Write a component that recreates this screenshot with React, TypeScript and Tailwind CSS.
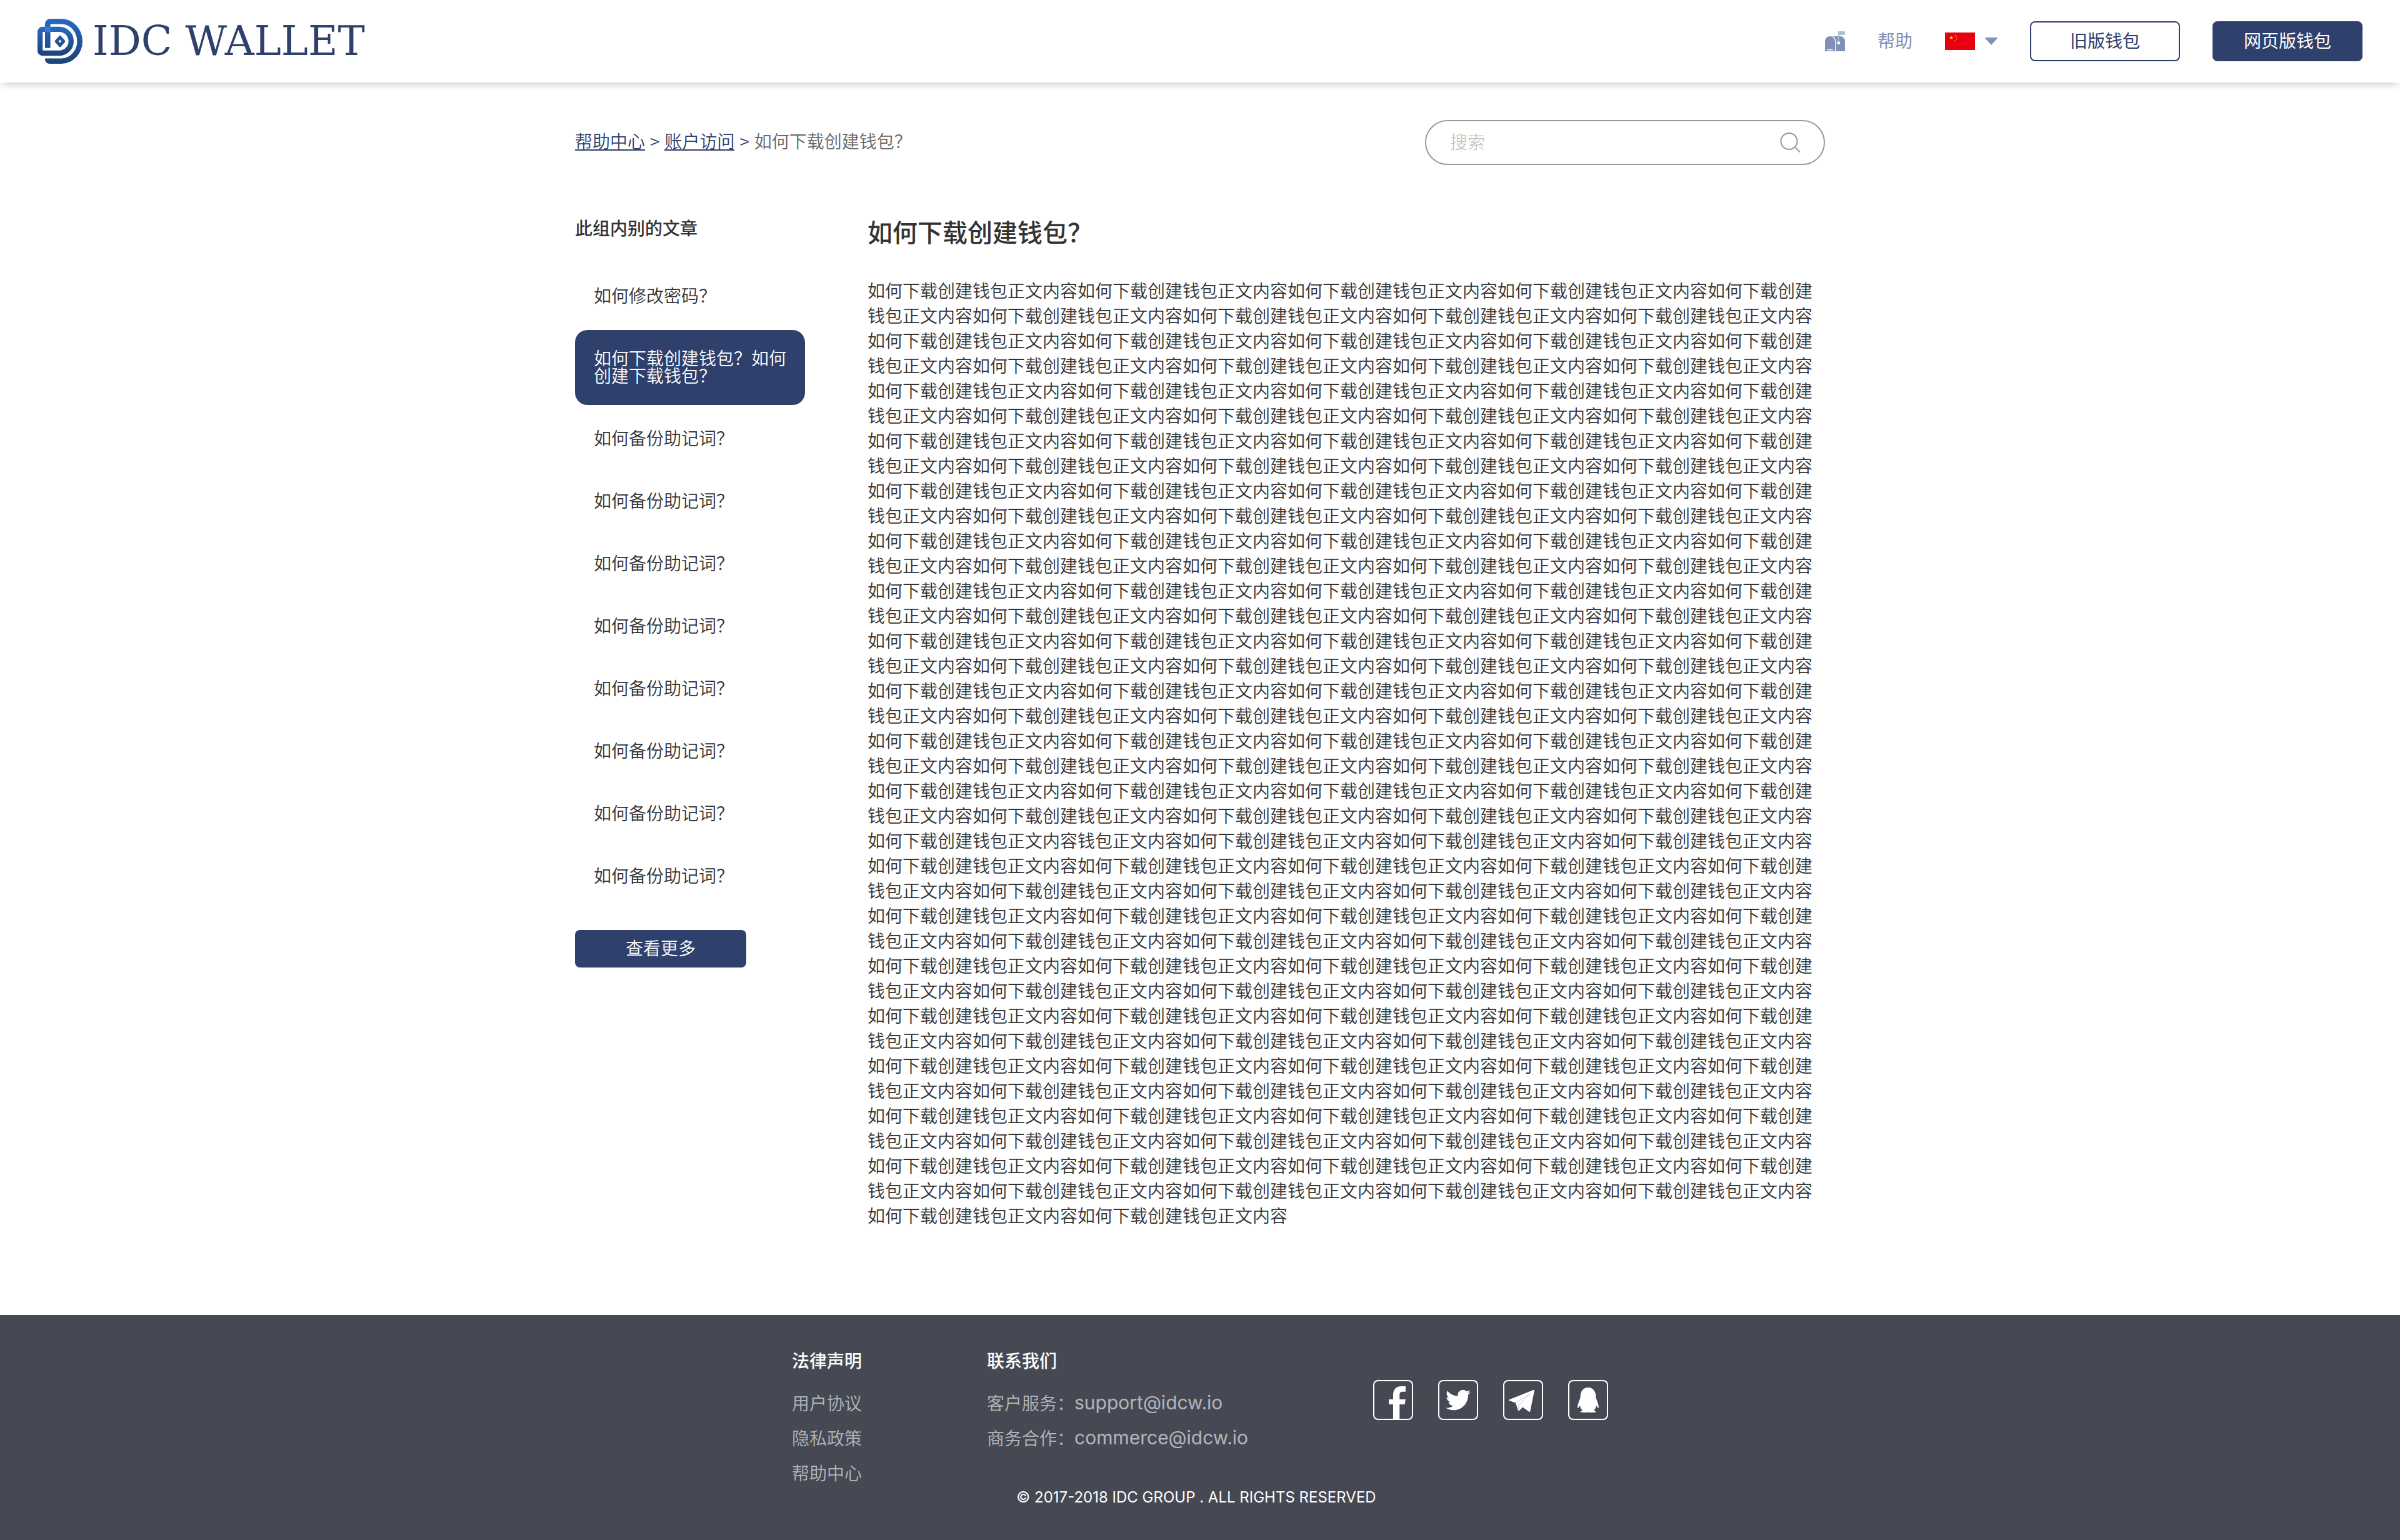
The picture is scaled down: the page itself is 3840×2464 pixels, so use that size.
import type { ReactNode } from 'react';
import { FaQq, FaTwitter } from 'react-icons/fa';

const UNIT = '如何下载创建钱包正文内容';
const ARTICLE = UNIT.repeat(100) + '钱包正文内容' + UNIT.repeat(68);

const ARTICLES = [
  '如何修改密码？',
  '如何下载创建钱包？如何创建下载钱包？',
  ...Array<string>(8).fill('如何备份助记词？'),
];
const ACTIVE = 1;

function LogoMark() {
  return (
    <svg className="size-18" viewBox="0 0 72 72" fill="none" aria-hidden="true">
      <defs>
        <linearGradient id="mark" gradientUnits="userSpaceOnUse" x1="0" y1="0" x2="0" y2="72">
          <stop offset="0" stopColor="#2869c0" />
          <stop offset="1" stopColor="#1b4377" />
        </linearGradient>
        <linearGradient id="markInner" gradientUnits="userSpaceOnUse" x1="0" y1="13" x2="0" y2="59">
          <stop offset="0" stopColor="#2869c0" />
          <stop offset="1" stopColor="#1b4377" />
        </linearGradient>
      </defs>
      <path d="M16.3 46.7V8.3a4 4 0 0 1 4-4H38A29.7 31.7 0 0 1 38 67.7H20" stroke="url(#mark)" strokeWidth="8.6" />
      <path d="M12 63.4H21V72H19.5A7.5 7.5 0 0 1 12 63.4Z" fill="url(#mark)" />
      <path d="M4.1 20.9a4 4 0 0 1 4-4H36A19.2 19.1 0 0 1 36 55H8.1a4 4 0 0 1-4-4Z" stroke="url(#markInner)" strokeWidth="8.3" />
      <path d="M12 12.7h8.6v8.4H12Z" fill="#3478dc" />
      <path
        fillRule="evenodd"
        d="M34.8 27.2q1.2-1.2 2.4 0l6.6 7.4q1.2 1.4 0 2.8l-6.6 7.6q-1.2 1.2-2.4 0l-6.6-7.6q-1.2-1.4 0-2.8ZM36 33.6l-2.2 2.4 2.2 2.4 2.2-2.4Z"
        fill="url(#markInner)"
      />
    </svg>
  );
}

function MailboxIcon() {
  return (
    <svg className="size-8" viewBox="0 0 32 32" aria-hidden="true">
      <path d="M0 32V16a8 8 0 0 1 16 0v16Z" fill="#8090b9" />
      <path d="M12.5 8H24a8 8 0 0 1 8 8v16H17.2V16a9 9 0 0 0-4.7-8Z" fill="#8090b9" />
      <rect x="3" y="29" width="10" height="1.4" rx=".7" fill="#fff" />
      <circle cx="21.6" cy="18.4" r="2.6" fill="#fff" />
      <path d="M20.8 0H30.5a1.5 1.5 0 0 1 1.5 1.5V4.5a1.5 1.5 0 0 1-1.5 1.5H22.4V18.5h-1.6Z" fill="#b3bdd8" />
    </svg>
  );
}

function star(cx: number, cy: number, r: number) {
  return Array.from({ length: 10 }, (_, i) => {
    const a = (Math.PI * i) / 5 - Math.PI / 2;
    const d = i % 2 ? r * 0.4 : r;
    return `${cx + d * Math.cos(a)},${cy + d * Math.sin(a)}`;
  }).join(' ');
}

function FlagIcon() {
  return (
    <svg className="h-7 w-12" viewBox="0 0 48 28" aria-hidden="true">
      <path d="M0 0h48v28H0Z" fill="#e60012" />
      <polygon points={star(10, 8.4, 3.6)} fill="#ffe100" />
      <polygon points={star(16, 4.8, 1.3)} fill="#ffe100" />
      <polygon points={star(18.6, 7.2, 1.3)} fill="#ffe100" />
      <polygon points={star(18.6, 10.8, 1.3)} fill="#ffe100" />
      <polygon points={star(16, 13.2, 1.3)} fill="#ffe100" />
    </svg>
  );
}

function SearchIcon() {
  return (
    <svg className="size-8" viewBox="0 0 32 32" fill="none" stroke="#999" strokeWidth="2" aria-hidden="true">
      <circle cx="14.5" cy="14" r="13" />
      <path d="M24 23.5l8 8" />
    </svg>
  );
}

function FacebookIcon() {
  return (
    <svg className="size-16" viewBox="0 0 64 64" fill="currentColor" aria-hidden="true">
      <path d="M32 63V39H25V31H32V24C32 15 37 10 45 10H52V18.7H47.5C44 18.7 42.3 20 42.3 24V31H52L50.5 39H42.3V63Z" />
    </svg>
  );
}

function TelegramIcon() {
  return (
    <svg className="size-16" viewBox="0 0 64 64" aria-hidden="true">
      <path
        d="M49 15.7q1.3 0 1 1.3L43.3 50q-.4 1.6-1.8.7L31.3 43.5L25.5 49.3q-1.3 1-1.7-.5L20 36.5L9.5 33q-1-.6 0-1.500Z"
        fill="#fff"
      />
      <path d="M20 36.5L43.3 22L25 39.8L24.4 49" fill="none" stroke="#b9bbc0" strokeWidth=".8" />
    </svg>
  );
}

function SocialLink({ label, children }: { label: string; children: ReactNode }) {
  return (
    <a
      href="#"
      aria-label={label}
      className="flex size-16 items-center justify-center rounded-lg text-white ring-2 ring-white ring-inset"
    >
      {children}
    </a>
  );
}

function ContactLine({ label, email }: { label: string; email: string }) {
  return (
    <li className="flex whitespace-nowrap">
      <span>{label}</span>
      <a href={`mailto:${email}`} className="font-['Inter',sans-serif] text-[30px] font-normal">{email}</a>
    </li>
  );
}

export default function App() {
  return (
    <div className="flex min-h-screen flex-col bg-white font-['Noto_Sans_CJK_SC',sans-serif] text-[28px] leading-7 font-[350] text-[#333]">
      <header className="flex h-33 items-center justify-between px-15 shadow-[0_6px_12px_-4px_rgba(46,64,107,0.3)]">
        <a href="#" className="flex items-center gap-4">
          <LogoMark />
          <span className="font-['DejaVu_Serif',serif] text-[65px] leading-16 font-normal text-[#2e406b]">IDC WALLET</span>
        </a>
        <nav className="flex items-center gap-13">
          <a href="#" aria-label="邮箱">
            <MailboxIcon />
          </a>
          <a href="#" className="pb-1 font-normal text-[#7f8fb9]">帮助</a>
          <button type="button" aria-label="语言" className="flex items-center gap-4">
            <FlagIcon />
            <svg className="h-3 w-5" viewBox="0 0 20 12" aria-hidden="true">
              <path d="M1 0H19q1.3.4.6 1.5L11 11q-1 1-2 0L.4 1.5Q-.3.4 1 0Z" fill="#8090b9" />
            </svg>
          </button>
          <button type="button" className="h-16 w-60 rounded-lg border-2 border-[#2e406b] pb-1 font-normal text-[#2e406b]">
            旧版钱包
          </button>
          <button type="button" className="h-16 w-60 rounded-lg bg-[#2e406b] pb-1 font-normal text-white">
            网页版钱包
          </button>
        </nav>
      </header>

      <main className="mx-auto w-full max-w-[2000px] flex-1 pt-15 pb-[140px]">
        <div className="flex items-center justify-between">
          <nav aria-label="面包屑" className="mb-1 flex gap-2 text-[#2e406b]">
            <a href="#" className="border-b-2 border-[#2e406b]">帮助中心</a>
            <span>&gt;</span>
            <a href="#" className="border-b-2 border-[#2e406b]">账户访问</a>
            <span>&gt;</span>
            <span className="text-[#666]">如何下载创建钱包？</span>
          </nav>
          <div className="flex h-18 w-160 items-center rounded-full border-2 border-[#999] px-[38px]">
            <input
              type="text"
              aria-label="搜索"
              placeholder="搜索"
              className="h-full min-w-0 flex-1 bg-transparent pb-1 leading-12 font-light outline-none placeholder:text-[#bbb]"
            />
            <SearchIcon />
          </div>
        </div>

        <div className="mt-[86px] flex items-start gap-25">
          <aside className="w-92 shrink-0">
            <h2 className="font-medium">此组内别的文章</h2>
            <ul className="mt-[50px] flex flex-col gap-2">
              {ARTICLES.map((title, i) => (
                <li key={i}>
                  <a
                    href="#"
                    aria-current={i === ACTIVE ? 'page' : undefined}
                    className={
                      i === ACTIVE
                        ? 'block rounded-[20px] bg-[#2e406b] px-[30px] pt-[30px] pb-[34px] text-white'
                        : 'block rounded-[20px] px-[30px] pt-[30px] pb-[34px]'
                    }
                  >
                    {title}
                  </a>
                </li>
              ))}
            </ul>
            <button type="button" className="mt-10 h-15 w-[274px] rounded-lg bg-[#2e406b] pb-1 text-white">
              查看更多
            </button>
          </aside>
          <article className="min-w-0 flex-1">
            <h1 className="text-[40px] leading-10 font-medium">如何下载创建钱包？</h1>
            <p className="mt-[54px] leading-10">{ARTICLE}</p>
          </article>
        </div>
      </main>

      <footer className="bg-[#464953] pt-[58px] pb-[58px] text-white">
        <div className="flex justify-center gap-50">
          <section>
            <h3 className="font-medium">法律声明</h3>
            <ul className="mt-[26px] leading-14 text-white/60">
              <li><a href="#">用户协议</a></li>
              <li><a href="#">隐私政策</a></li>
              <li><a href="#">帮助中心</a></li>
            </ul>
          </section>
          <section className="w-[418px]">
            <h3 className="font-medium">联系我们</h3>
            <ul className="mt-[26px] leading-14 text-white/60">
              <ContactLine label="客户服务：" email="support@idcw.io" />
              <ContactLine label="商务合作：" email="commerce@idcw.io" />
            </ul>
          </section>
          <div className="mt-[46px] flex gap-10">
            <SocialLink label="Facebook"><FacebookIcon /></SocialLink>
            <SocialLink label="Twitter"><FaTwitter className="size-10" /></SocialLink>
            <SocialLink label="Telegram"><TelegramIcon /></SocialLink>
            <SocialLink label="QQ"><FaQq className="size-10" /></SocialLink>
          </div>
        </div>
        <p className="mt-0.5 pr-3 text-center font-['Inter',sans-serif] text-[24px] leading-5 font-normal">
          © 2017-2018 IDC GROUP . ALL RIGHTS RESERVED
        </p>
      </footer>
    </div>
  );
}
